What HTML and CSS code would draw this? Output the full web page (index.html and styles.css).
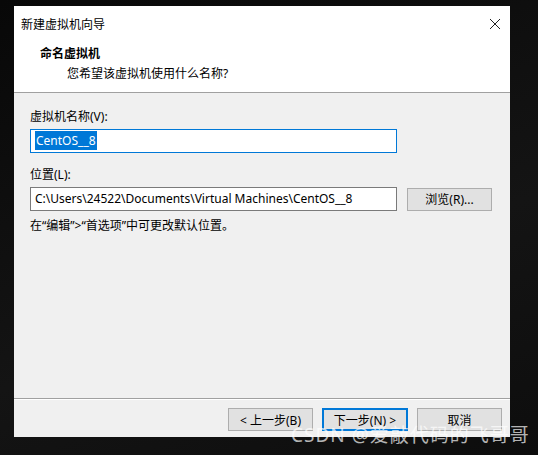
FILE: index.html
```html
<!DOCTYPE html>
<html lang="zh-CN">
<head>
  <meta charset="UTF-8">
  <title>新建虚拟机向导</title>
  <link rel="stylesheet" href="styles.css">
</head>
<body>
  <div class="dialog">
    <div class="header">
      <div class="titlebar">
        <span class="title">新建虚拟机向导</span>
        <span class="close">
          <svg width="12" height="12" viewBox="0 0 12 12">
            <path d="M1 1 L11 11 M11 1 L1 11" stroke="#222" stroke-width="1" fill="none"/>
          </svg>
        </span>
      </div>
      <div class="heading">命名虚拟机</div>
      <div class="subheading">您希望该虚拟机使用什么名称?</div>
    </div>

    <div class="content">
      <label class="field-label">虚拟机名称(V):</label>
      <div class="textbox focused"><span class="selected">CentOS__8</span></div>

      <label class="field-label loc-label">位置(L):</label>
      <div class="row">
        <div class="textbox">C:\Users\24522\Documents\Virtual Machines\CentOS__8</div>
        <button class="btn browse">浏览(R)...</button>
      </div>
      <div class="hint">在“编辑”&gt;“首选项”中可更改默认位置。</div>
    </div>

    <div class="footer">
      <button class="btn">&lt; 上一步(B)</button>
      <button class="btn default">下一步(N) &gt;</button>
      <button class="btn">取消</button>
    </div>
  </div>

  <div class="watermark">CSDN @爱敲代码的飞哥哥</div>
</body>
</html>
```

FILE: styles.css
```css
body {
  margin: 0;
  width: 538px;
  height: 455px;
  background: linear-gradient(160deg, #080808 0%, #141414 60%, #0d0d0d 100%);
  font-family: "Noto Sans", "Noto Sans CJK SC", sans-serif;
  font-size: 12px;
  color: #000;
  overflow: hidden;
  position: relative;
}

.dialog {
  margin: 6px 0 0 14px;
  width: 496px;
  height: 431px;
  background-color: #f0f0f0;
  display: flex;
  flex-direction: column;
}

.header {
  background-color: #fff;
  height: 87px;
  border-bottom: 1px solid #a0a0a0;
  box-sizing: border-box;
}

.titlebar {
  display: flex;
  justify-content: space-between;
  align-items: center;
  height: 34px;
  padding: 2px 9px 0 7px;
  box-sizing: border-box;
}

.title {
  color: #000;
}

.close {
  display: flex;
}

.heading {
  font-weight: bold;
  font-size: 12px;
  padding-left: 26px;
  line-height: 18px;
  margin-top: 5px;
}

.subheading {
  padding-left: 53px;
  line-height: 18px;
  margin-top: 2px;
}

.content {
  flex-grow: 1;
  padding: 16px 0 0 16px;
  display: flex;
  flex-direction: column;
}

.field-label {
  line-height: 16px;
}

.loc-label {
  margin-top: 14px;
}

.textbox {
  width: 367px;
  height: 24px;
  box-sizing: border-box;
  border: 1px solid #7a7a7a;
  background-color: #fff;
  padding: 2px 4px;
  line-height: 18px;
  margin-top: 4px;
  white-space: nowrap;
}

.textbox.focused {
  border-color: #0078d7;
}

.selected {
  background-color: #0078d7;
  color: #fff;
  padding: 1px 1px;
}

.row {
  display: flex;
  align-items: center;
  gap: 10px;
}

.hint {
  margin-top: 7px;
  line-height: 16px;
}

.btn {
  font-family: inherit;
  font-size: 12px;
  height: 23px;
  width: 85px;
  background-color: #e1e1e1;
  border: 1px solid #adadad;
  color: #000;
  padding: 0;
}

.browse {
  margin-top: 4px;
}

.btn.default {
  border: 2px solid #0078d7;
  width: 86px;
}

.footer {
  border-top: 1px solid #a0a0a0;
  box-shadow: inset 0 1px 0 #fff;
  height: 39px;
  box-sizing: border-box;
  display: flex;
  justify-content: flex-end;
  align-items: flex-start;
  gap: 9px;
  padding: 9px 8px 0 0;
}

.watermark {
  position: absolute;
  left: 291px;
  top: 424px;
  font-size: 19px;
  line-height: 22px;
  color: rgba(255, 255, 255, 0.7);
  letter-spacing: 1px;
  white-space: nowrap;
}
```
